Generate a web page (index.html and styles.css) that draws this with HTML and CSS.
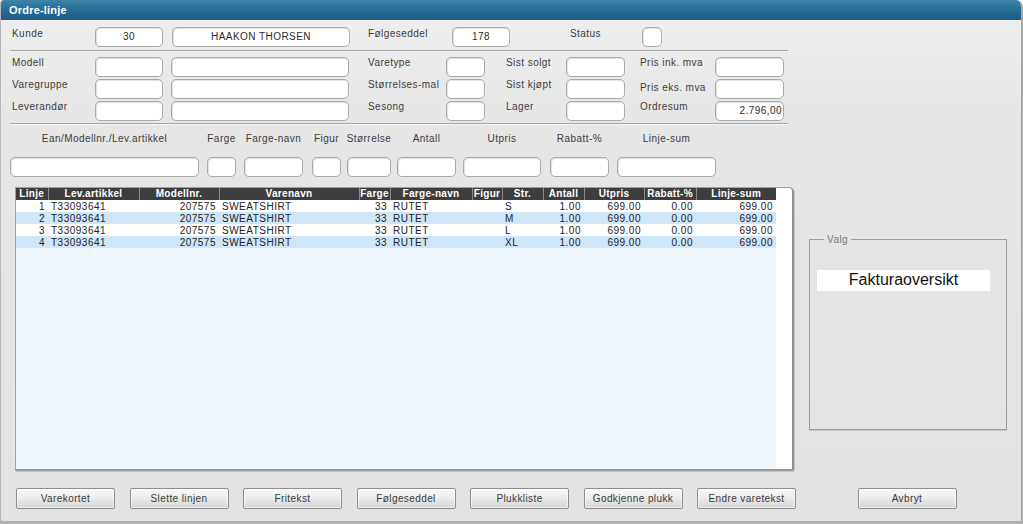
FILE: index.html
```html
<!DOCTYPE html>
<html lang="no">
<head>
<meta charset="utf-8">
<title>Ordre-linje</title>
<link rel="stylesheet" href="styles.css">
</head>
<body>
<div class="window">
  <div class="titlebar">Ordre-linje</div>
  <div class="content">
    <div class="row1">
      <span class="lbl">Kunde</span>
      <div class="field c">30</div>
      <span></span>
      <div class="field c">HAAKON THORSEN</div>
      <span></span>
      <span class="lbl">Følgeseddel</span>
      <div class="field c">178</div>
      <span></span>
      <span class="lbl">Status</span>
      <div class="field"></div>
    </div>
    <div class="sep"></div>
    <div class="rows">
      <span class="lbl">Modell</span><div class="field"></div><span></span><div class="field"></div><span></span>
      <span class="lbl">Varetype</span><div class="field"></div><span></span>
      <span class="lbl">Sist solgt</span><div class="field"></div><span></span>
      <span class="lbl">Pris ink. mva</span><div class="field"></div>

      <span class="lbl">Varegruppe</span><div class="field"></div><span></span><div class="field"></div><span></span>
      <span class="lbl">Størrelses-mal</span><div class="field"></div><span></span>
      <span class="lbl">Sist kjøpt</span><div class="field"></div><span></span>
      <span class="lbl lo">Pris eks. mva</span><div class="field"></div>

      <span class="lbl">Leverandør</span><div class="field"></div><span></span><div class="field"></div><span></span>
      <span class="lbl">Sesong</span><div class="field"></div><span></span>
      <span class="lbl">Lager</span><div class="field"></div><span></span>
      <span class="lbl">Ordresum</span><div class="field r">2.796,00</div>
    </div>
    <div class="sep"></div>
    <div class="entry">
      <div class="ef w1"><span>Ean/Modellnr./Lev.artikkel</span><div class="field"></div></div>
      <div class="ef w2"><span>Farge</span><div class="field"></div></div>
      <div class="ef w3"><span>Farge-navn</span><div class="field"></div></div>
      <div class="ef w4"><span>Figur</span><div class="field"></div></div>
      <div class="ef w5"><span>Størrelse</span><div class="field"></div></div>
      <div class="ef w6"><span>Antall</span><div class="field"></div></div>
      <div class="ef w7"><span>Utpris</span><div class="field"></div></div>
      <div class="ef w8"><span>Rabatt-%</span><div class="field"></div></div>
      <div class="ef w9"><span>Linje-sum</span><div class="field"></div></div>
    </div>
    <div class="lower">
      <div class="gridbox">
        <div class="tablepane">
          <table class="lines">
            <colgroup>
              <col class="k1"><col class="k2"><col class="k3"><col class="k4"><col class="k5"><col class="k6">
              <col class="k7"><col class="k8"><col class="k9"><col class="k10"><col class="k11"><col class="k12">
            </colgroup>
            <thead>
              <tr><th>Linje</th><th>Lev.artikkel</th><th>Modellnr.</th><th>Varenavn</th><th>Farge</th><th>Farge-navn</th><th>Figur</th><th>Str.</th><th>Antall</th><th>Utpris</th><th>Rabatt-%</th><th>Linje-sum</th></tr>
            </thead>
            <tbody>
              <tr><td class="r">1</td><td>T33093641</td><td class="r">207575</td><td>SWEATSHIRT</td><td class="r">33</td><td>RUTET</td><td></td><td>S</td><td class="r">1.00</td><td class="r">699.00</td><td class="r">0.00</td><td class="r">699.00</td></tr>
              <tr><td class="r">2</td><td>T33093641</td><td class="r">207575</td><td>SWEATSHIRT</td><td class="r">33</td><td>RUTET</td><td></td><td>M</td><td class="r">1.00</td><td class="r">699.00</td><td class="r">0.00</td><td class="r">699.00</td></tr>
              <tr><td class="r">3</td><td>T33093641</td><td class="r">207575</td><td>SWEATSHIRT</td><td class="r">33</td><td>RUTET</td><td></td><td>L</td><td class="r">1.00</td><td class="r">699.00</td><td class="r">0.00</td><td class="r">699.00</td></tr>
              <tr><td class="r">4</td><td>T33093641</td><td class="r">207575</td><td>SWEATSHIRT</td><td class="r">33</td><td>RUTET</td><td></td><td>XL</td><td class="r">1.00</td><td class="r">699.00</td><td class="r">0.00</td><td class="r">699.00</td></tr>
            </tbody>
          </table>
        </div>
      </div>
      <fieldset class="valg">
        <legend>Valg</legend>
        <div class="choice">Fakturaoversikt</div>
      </fieldset>
    </div>
    <div class="buttons">
      <button class="btn">Varekortet</button>
      <button class="btn">Slette linjen</button>
      <button class="btn">Fritekst</button>
      <button class="btn">Følgeseddel</button>
      <button class="btn">Plukkliste</button>
      <button class="btn">Godkjenne plukk</button>
      <button class="btn">Endre varetekst</button>
      <button class="btn avbryt">Avbryt</button>
    </div>
  </div>
</div>
</body>
</html>
```
FILE: styles.css
```css
* { box-sizing: border-box; }
html, body { margin: 0; padding: 0; background: #ffffff; }
body {
  font-family: "Liberation Sans", Arial, sans-serif;
  font-size: 10px;
  color: #3c3c3c;
  letter-spacing: 0.45px;
}
.window {
  width: 1023px;
  height: 524px;
  display: flex;
  flex-direction: column;
  background: linear-gradient(#f0f0f0 0px, #e6e6e6 120px, #e2e2e2 524px);
  border-left: 1px solid #b5b5b5;
  border-right: 2px solid #a8a8a8;
  border-bottom: 3px solid #b0b0b0;
  border-radius: 4px 7px 0 0;
  overflow: hidden;
}
.titlebar {
  height: 20px;
  flex: none;
  background: linear-gradient(#3f84aa, #266c93 50%, #1c5c83);
  color: #fff;
  font-weight: bold;
  font-size: 11px;
  letter-spacing: 0.2px;
  padding: 4px 0 0 8px;
}
.content {
  padding: 7px 0 0 8px;
  flex: 1;
}
.lbl {
  padding: 0 0 0 3px;
  white-space: nowrap;
}
.lo { padding-top: 3px; }
.field {
  height: 20px;
  background: #fff;
  border: 1px solid #a9a9a9;
  border-radius: 5px;
  box-shadow: inset 1px 1px 1px rgba(0,0,0,0.12);
  font-size: 10px;
  line-height: 18px;
  padding: 0 3px;
  color: #2a2a2a;
}
.field.c { text-align: center; }
.field.r { text-align: right; padding-right: 1px; }
.row1 {
  display: grid;
  grid-template-columns: 86px 68px 9px 178px 15px 87px 58px 57px 75px 20px;
  height: 20px;
}
.row1 .lbl { padding-top: 1px; }
.sep {
  width: 778px;
  height: 2px;
  border-top: 1px solid #a4a4a4;
  border-bottom: 1px solid #f6f6f6;
  margin: 3px 0 5px 1px;
}
.rows {
  display: grid;
  grid-template-columns: 86px 68px 8px 178px 16px 81px 39px 18px 63px 59px 12px 78px 69px;
  grid-auto-rows: 20px;
  row-gap: 2px;
}
.rows + .sep { margin-top: 2px; }
.entry {
  display: flex;
  margin-top: 6px;
  margin-left: 1px;
}
.ef {
  display: flex;
  flex-direction: column;
  align-items: center;
  flex: none;
}
.ef span { height: 26px; white-space: nowrap; padding-top: 2px; }
.ef .field { width: 100%; }
.w1 { width: 189px; }
.w2 { width: 29px; margin-left: 8px; }
.w3 { width: 59px; margin-left: 8px; }
.w4 { width: 29px; margin-left: 9px; }
.w5 { width: 44px; margin-left: 6px; }
.w6 { width: 59px; margin-left: 6px; }
.w7 { width: 78px; margin-left: 7px; }
.w8 { width: 59px; margin-left: 9px; }
.w9 { width: 99px; margin-left: 8px; }
.lower {
  display: flex;
  align-items: flex-start;
  margin-top: 10px;
}
.gridbox {
  width: 779px;
  height: 284px;
  margin-left: 6px;
  background: #fff;
  border: 1px solid #a0a0a0;
  border-right: 2px solid #8f8f8f;
  border-bottom: 2px solid #9a9a9a;
  border-radius: 0 5px 2px 0;
  box-shadow: 1px 1px 0 #c4c4c4;
  overflow: hidden;
}
.tablepane {
  width: 760px;
  height: 100%;
  background: #eef5fd;
}
.lines {
  border-collapse: collapse;
  table-layout: fixed;
  width: 760px;
  font-size: 10px;
  letter-spacing: 0.5px;
}
.k1 { width: 32px; } .k2 { width: 91px; } .k3 { width: 80px; } .k4 { width: 140px; }
.k5 { width: 31px; } .k6 { width: 82px; } .k7 { width: 30px; } .k8 { width: 41px; }
.k9 { width: 41px; } .k10 { width: 60px; } .k11 { width: 52px; } .k12 { width: 80px; }
.lines th {
  height: 12px;
  background: #3d3d3d;
  color: #fff;
  font-weight: bold;
  padding: 0;
  line-height: 12px;
  border-left: 1px solid #8a8a8a;
  text-align: center;
  letter-spacing: 0.3px;
}
.lines th:first-child { border-left: none; }
.lines td {
  height: 12px;
  line-height: 11px;
  padding: 0 3px;
  color: #222;
  white-space: nowrap;
  overflow: hidden;
}
.lines td.r { text-align: right; }
.lines tbody tr:nth-child(odd) td { background: #ffffff; }
.lines tbody tr:nth-child(even) td { background: #cfe5f8; }
.valg {
  width: 198px;
  height: 196px;
  margin: 47px 0 0 15px;
  padding: 25px 0 0 7px;
  border: 1px solid #9c9c9c;
  box-shadow: 0 1px 0 #c8c8c8;
}
.valg legend {
  color: #777;
  padding: 0 3px;
  margin-left: 7px;
  font-size: 10px;
}
.choice {
  width: 173px;
  height: 21px;
  background: #fff;
  color: #111;
  font-size: 16px;
  letter-spacing: 0;
  text-align: center;
  line-height: 20px;
}
.buttons {
  display: flex;
  gap: 14.5px;
  margin: 17px 0 0 7px;
}
.btn {
  width: 99px;
  height: 21px;
  flex: none;
  font-family: "Liberation Sans", Arial, sans-serif;
  font-size: 10px;
  letter-spacing: 0.4px;
  color: #3a3a3a;
  background: linear-gradient(#fbfbfb, #ececec 45%, #d4d4d4);
  border: 1px solid #8e8e8e;
  border-radius: 2px;
  box-shadow: inset 0 0 0 1px rgba(255,255,255,0.6);
  padding: 0;
}
.avbryt { margin-left: 47px; }
```
